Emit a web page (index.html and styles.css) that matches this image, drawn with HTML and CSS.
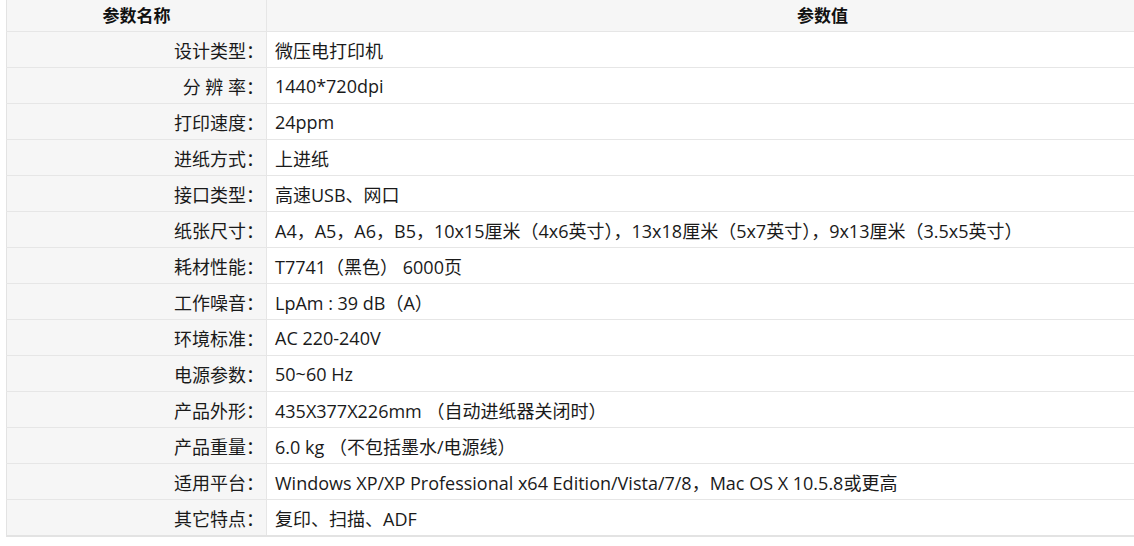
FILE: index.html
```html
<!DOCTYPE html>
<html lang="zh-CN">
<head>
<meta charset="UTF-8">
<title>参数</title>
<link rel="stylesheet" href="styles.css">
</head>
<body>
<div class="spec-wrap">
  <table class="spec-table">
    <thead>
      <tr>
        <th class="name-col">参数名称</th>
        <th>参数值</th>
      </tr>
    </thead>
    <tbody>
      <tr><td class="name-col">设计类型：</td><td>微压电打印机</td></tr>
      <tr><td class="name-col">分 辨 率：</td><td>1440*720dpi</td></tr>
      <tr><td class="name-col">打印速度：</td><td>24ppm</td></tr>
      <tr><td class="name-col">进纸方式：</td><td>上进纸</td></tr>
      <tr><td class="name-col">接口类型：</td><td>高速USB、网口</td></tr>
      <tr><td class="name-col">纸张尺寸：</td><td>A4，A5，A6，B5，10x15厘米（4x6英寸），13x18厘米（5x7英寸），9x13厘米（3.5x5英寸）</td></tr>
      <tr><td class="name-col">耗材性能：</td><td>T7741（黑色） 6000页</td></tr>
      <tr><td class="name-col">工作噪音：</td><td>LpAm : 39 dB（A）</td></tr>
      <tr><td class="name-col">环境标准：</td><td>AC 220-240V</td></tr>
      <tr><td class="name-col">电源参数：</td><td>50~60 Hz</td></tr>
      <tr><td class="name-col">产品外形：</td><td>435X377X226mm （自动进纸器关闭时）</td></tr>
      <tr><td class="name-col">产品重量：</td><td>6.0 kg （不包括墨水/电源线）</td></tr>
      <tr><td class="name-col">适用平台：</td><td>Windows XP/XP Professional x64 Edition/Vista/7/8，Mac OS X 10.5.8或更高</td></tr>
      <tr><td class="name-col">其它特点：</td><td>复印、扫描、ADF</td></tr>
    </tbody>
  </table>
</div>
</body>
</html>
```

FILE: styles.css
```css
body {
  margin: 0;
  padding: 0;
  background: #fff;
  font-family: "Open Sans", "Noto Sans CJK SC", sans-serif;
  color: #1a1a1a;
  overflow: hidden;
}

.spec-wrap {
  padding-left: 6px;
  width: 1400px;
}

.spec-table {
  width: 1372px;
  border-collapse: collapse;
  table-layout: fixed;
  border-left: 1px solid #e3e3e3;
  border-bottom: 2px solid #e3e3e3;
}

.spec-table th,
.spec-table td {
  height: 35px;
  padding: 0;
  border-bottom: 1px solid #e6e6e6;
  font-size: 18px;
  white-space: nowrap;
  overflow: hidden;
}

.spec-table th {
  height: 31px;
  background: #f6f6f6;
  font-weight: bold;
  font-size: 17px;
  color: #111;
  text-align: center;
  line-height: 30px;
}

.spec-table .name-col {
  width: 260px;
  background: #f6f6f6;
  border-right: 1px solid #e6e6e6;
  text-align: right;
  padding-right: 2px;
  box-sizing: border-box;
}

.spec-table th.name-col {
  text-align: center;
  padding-right: 0;
}

.spec-table td {
  padding-left: 8px;
}

.spec-table td.name-col {
  padding-left: 0;
}
```
